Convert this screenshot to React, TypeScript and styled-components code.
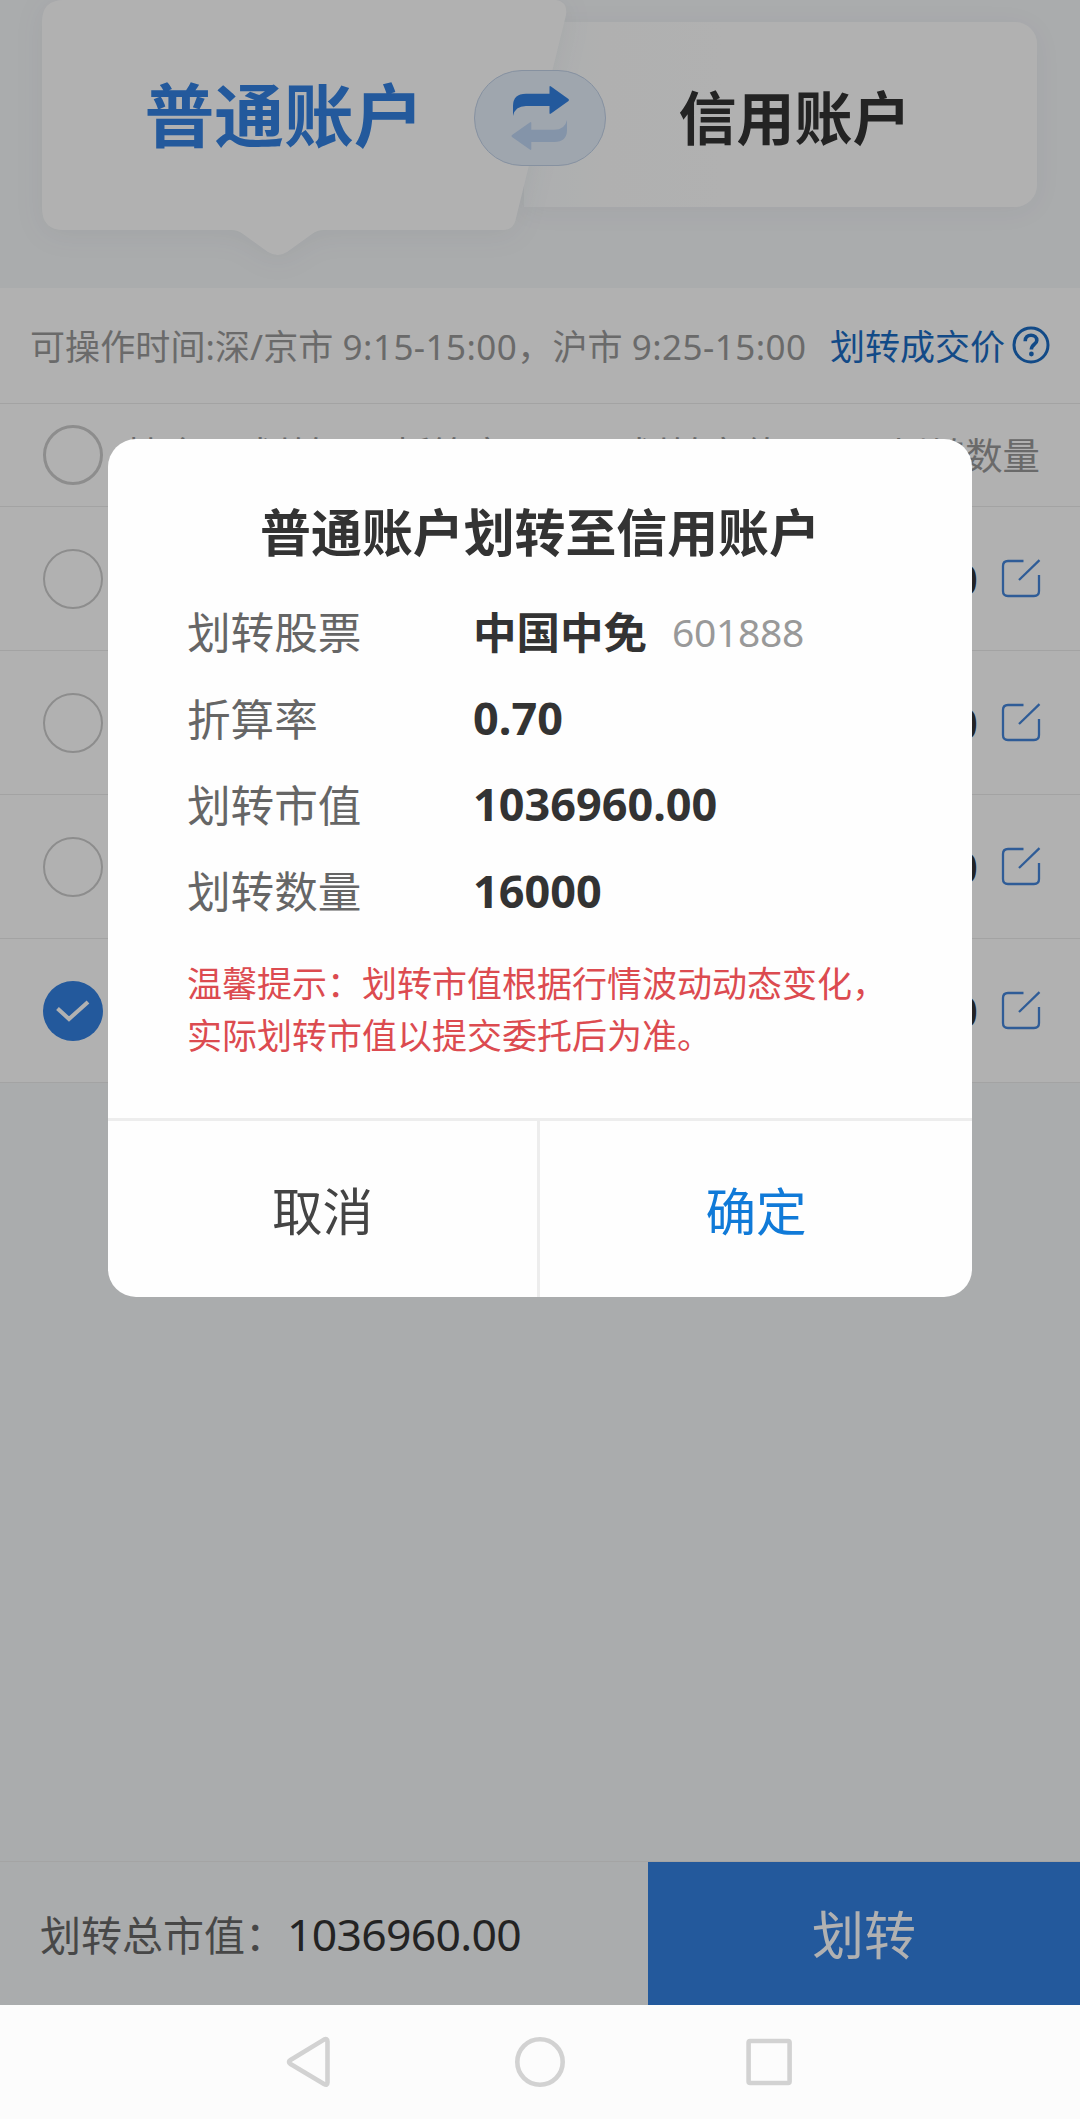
import React from "react";
import styled, { createGlobalStyle } from "styled-components";

const GlobalStyle = createGlobalStyle`
  *, *::before, *::after { box-sizing: border-box; }
  body {
    margin: 0;
    background: #f4f6f8;
    font-family: "Noto Sans", "Noto Sans CJK SC", sans-serif;
    color: #333;
  }
  button { border: 0; padding: 0; background: none; font: inherit; color: inherit; }
`;

const Screen = styled.div`
  position: relative;
  display: flex;
  flex-direction: column;
  width: 1080px;
  height: 2119px;
  overflow: hidden;
  white-space: nowrap;
`;

const Page = styled.main`
  position: relative;
  display: flex;
  flex-direction: column;
  height: 2005px;
  background: #f4f6f8;
`;

/* ---------- account switch ---------- */

const AccountSwitch = styled.section`
  position: relative;
  display: flex;
  flex: none;
  height: 288px;
  padding-left: 42px;
`;

const AccountTab = styled.button<{ $active?: boolean }>`
  position: relative;
  display: flex;
  align-items: center;
  justify-content: center;
  width: ${(p) => (p.$active ? 482 : 513)}px;
  height: ${(p) => (p.$active ? 226 : 185)}px;
  margin-top: ${(p) => (p.$active ? 0 : 22)}px;
  padding-top: ${(p) => (p.$active ? 3 : 6)}px;
  padding-left: ${(p) => (p.$active ? 2 : 28)}px;
  border-radius: 0 22px 22px 0;
  background: ${(p) => (p.$active ? "transparent" : "linear-gradient(90deg, #f8fafc 0, #fcfdfd 80px, #fefefe 200px)")};
  box-shadow: ${(p) => (p.$active ? "none" : "0 4px 28px rgba(40, 60, 90, 0.05)")};
  z-index: ${(p) => (p.$active ? 1 : 0)};
  color: ${(p) => (p.$active ? "#3380e0" : "#333")};
  font-size: ${(p) => (p.$active ? 69.8 : 58)}px;
  font-weight: 700;
  line-height: 1;
`;

const TabLabel = styled.span`
  position: relative;
`;

const ActiveShape = styled.svg`
  position: absolute;
  left: -42px;
  top: 0;
  overflow: visible;
  filter: drop-shadow(0 4px 14px rgba(40, 60, 90, 0.06));
`;

const SwapButton = styled.button`
  position: absolute;
  z-index: 2;
  left: 474px;
  top: 70px;
  width: 132px;
  height: 96px;
  border: 1px solid #c0d0e6;
  border-radius: 48px;
  background: #e4eefa;
`;

/* ---------- notice and table ---------- */

const Notice = styled.div`
  display: flex;
  align-items: center;
  justify-content: space-between;
  flex: none;
  height: 116px;
  padding: 0 30px 2px 30px;
  border-bottom: 1px solid #eaeaea;
  background: #fefefe;
  color: #999;
  font-size: 35px;
`;

const NoticeText = styled.span`
  letter-spacing: 0.1px;
`;

const Hours = styled.span`
  letter-spacing: 0.45px;
`;

const PriceLink = styled.a`
  display: flex;
  align-items: center;
  gap: 7px;
  color: #1a6bc2;
`;

const TableHead = styled.div`
  display: flex;
  align-items: center;
  flex: none;
  height: 103px;
  padding: 0 40px 0 43px;
  border-bottom: 1px solid #eaeaea;
  background: #fefefe;
  color: #999;
  font-size: 37.4px;
`;

const Column = styled.span<{ $width: number }>`
  width: ${(p) => p.$width}px;
  padding-bottom: 4px;
`;

const LastColumn = styled.span`
  margin-left: auto;
  padding-bottom: 2px;
`;

const Row = styled.div`
  display: flex;
  align-items: center;
  flex: none;
  height: 144px;
  padding: 0 39px 0 43px;
  border-bottom: 1px solid #eaeaea;
  background: #fefefe;
`;

const Quantity = styled.span`
  margin-left: auto;
  margin-right: 23px;
  font-size: 41px;
  font-weight: 500;
`;

const Radio = styled.span<{ $heavy?: boolean }>`
  flex: none;
  width: 60px;
  height: 60px;
  margin-right: 23px;
  border: ${(p) => (p.$heavy ? 3 : 2.5)}px solid #cacaca;
  border-radius: 50%;
`;

const RadioChecked = styled.span`
  display: flex;
  flex: none;
  align-items: center;
  justify-content: center;
  width: 60px;
  height: 60px;
  border-radius: 50%;
  background: #3380e0;
`;

/* ---------- footer ---------- */

const Footer = styled.footer`
  display: flex;
  align-items: stretch;
  height: 144px;
  margin-top: auto;
  border-top: 1px solid #ebebeb;
`;

const Total = styled.div`
  display: flex;
  align-items: center;
  width: 648px;
  padding-left: 40px;
`;

const TotalLabel = styled.span`
  width: 247px;
  padding-bottom: 2px;
  color: #666;
  font-size: 41px;
`;

const TotalValue = styled.span`
  font-size: 44.5px;
  letter-spacing: -0.7px;
`;

const TransferButton = styled.button`
  flex: 1;
  padding-bottom: 3px;
  background: #3380e0;
  color: #fefefe;
  font-size: 52px;
`;

const Mask = styled.div`
  position: absolute;
  z-index: 5;
  inset: 0;
  background: rgba(0, 0, 0, 0.3);
`;

/* ---------- dialog ---------- */

const Dialog = styled.section`
  position: absolute;
  z-index: 6;
  left: 108px;
  top: 439px;
  display: flex;
  flex-direction: column;
  width: 864px;
  height: 858px;
  border-radius: 28px;
  overflow: hidden;
  background: #fefefe;
`;

const DialogTitle = styled.h2`
  margin: 62px 0 23px;
  font-size: 50.9px;
  font-weight: 700;
  line-height: 64px;
  text-align: center;
`;

const Detail = styled.div`
  display: flex;
  align-items: center;
  height: 86.4px;
  padding-left: 79px;
  font-size: 43.6px;
`;

const DetailLabel = styled.span`
  width: 286px;
  padding-bottom: 2px;
  color: #666;
`;

const DetailValue = styled.strong<{ $numeric?: boolean }>`
  padding-bottom: ${(p) => (p.$numeric ? 0 : 2)}px;
  font-weight: 700;
  font-size: ${(p) => (p.$numeric ? 45 : 43.5)}px;
`;

const StockCode = styled.span`
  margin-left: 25px;
  color: #999;
  font-size: 39px;
  letter-spacing: -0.3px;
`;

const Tip = styled.p`
  margin: 24px 0 0 79px;
  color: #dc4b50;
  font-size: 35px;
  line-height: 52px;
`;

const DialogActions = styled.div`
  display: flex;
  height: 179px;
  margin-top: auto;
  border-top: 3px solid #ededed;
`;

const ActionButton = styled.button<{ $primary?: boolean }>`
  width: 432px;
  border-right: ${(p) => (p.$primary ? "0" : "3px solid #ededed")};
  color: ${(p) => (p.$primary ? "#107ad8" : "#444")};
  font-size: 50.6px;
`;

/* ---------- system navigation ---------- */

const SystemNav = styled.nav`
  height: 114px;
  background: #fcfcfc;
`;

function EditIcon() {
  return (
    <svg width="40" height="40" viewBox="0 0 40 40" fill="none" stroke="#4485d8" strokeWidth="2.3">
      <path d="M22.5 2H7Q2 2 2 7V32Q2 37 7 37H33Q38 37 38 32V16" />
      <path d="M38.5 1.2L18 21" />
    </svg>
  );
}

function HelpIcon() {
  return (
    <svg width="38" height="38" viewBox="0 0 38 38" fill="none" stroke="#1a6bc2" strokeWidth="3">
      <circle cx="19" cy="19" r="17" />
      <path d="M13.2 15.2C13.2 11 15.8 9.3 19 9.3S24.8 11.3 24.8 14.4C24.8 18 19.4 18.5 19.4 23.5" strokeWidth="3.6" />
      <circle cx="19.4" cy="28" r="2.4" fill="#1a6bc2" stroke="none" />
    </svg>
  );
}

function SwapIcon() {
  return (
    <svg width="130" height="94" viewBox="475 71 130 94">
      <path
        d="M513 116V106Q513 93.7 526 93.7H549.5V87Q549.5 85.5 551 86.5L568.5 99Q569.5 100 568.5 101L551 113.6Q549.5 114.6 549.5 113V106H526Q515 106 513 116Z"
        fill="#3380e0"
      />
      <path
        d="M567 120V130Q567 142 554 142H531.3V149Q531.3 150.5 529.8 149.5L512 137Q510.8 136 512 135L529.8 122.5Q531.3 121.5 531.3 123V129.8H554Q565 129.8 567 120Z"
        fill="#bdd4f2"
      />
    </svg>
  );
}

const rows = [
  { quantity: "0", checked: false },
  { quantity: "0", checked: false },
  { quantity: "0", checked: false },
  { quantity: "16000", checked: true },
];

export default function App() {
  return (
    <>
      <GlobalStyle />
      <Screen>
        <Page>
          <AccountSwitch>
            <AccountTab $active>
              <ActiveShape width="600" height="260" viewBox="0 0 600 260" fill="#fefefe">
                <path d="M64 0H556Q568 2 566 15L516 218Q514 230 503 230H324Q317 230 312 234L287 252Q278 258 268 252L243 234Q238 230 231 230H64Q42 230 42 208V22Q42 0 64 0Z" />
              </ActiveShape>
              <TabLabel>普通账户</TabLabel>
            </AccountTab>
            <AccountTab>
              <TabLabel>信用账户</TabLabel>
            </AccountTab>
            <SwapButton>
              <SwapIcon />
            </SwapButton>
          </AccountSwitch>
          <Notice>
            <NoticeText>
              可操作时间:深/京市 <Hours>9:15-15:00</Hours>，沪市 <Hours>9:25-15:00</Hours>
            </NoticeText>
            <PriceLink>
              划转成交价
              <HelpIcon />
            </PriceLink>
          </Notice>
          <TableHead>
            <Radio $heavy />
            <Column $width={268}>持仓/可划转</Column>
            <Column $width={237}>折算率</Column>
            <Column $width={200}>划转市值</Column>
            <LastColumn>划转数量</LastColumn>
          </TableHead>
          {rows.map((row, i) => (
            <Row key={i}>
              {row.checked ? (
                <RadioChecked>
                  <svg width="34" height="24" viewBox="0 0 34 24" fill="none" stroke="#fefefe" strokeWidth="4">
                    <path d="M1.5 9.5L13 20L32 3" />
                  </svg>
                </RadioChecked>
              ) : (
                <Radio />
              )}
              <Quantity>{row.quantity}</Quantity>
              <EditIcon />
            </Row>
          ))}
          <Footer>
            <Total>
              <TotalLabel>划转总市值：</TotalLabel>
              <TotalValue>1036960.00</TotalValue>
            </Total>
            <TransferButton>划转</TransferButton>
          </Footer>
          <Mask />
        </Page>
        <Dialog>
          <DialogTitle>普通账户划转至信用账户</DialogTitle>
          <Detail>
            <DetailLabel>划转股票</DetailLabel>
            <DetailValue>中国中免</DetailValue>
            <StockCode>601888</StockCode>
          </Detail>
          <Detail>
            <DetailLabel>折算率</DetailLabel>
            <DetailValue $numeric>0.70</DetailValue>
          </Detail>
          <Detail>
            <DetailLabel>划转市值</DetailLabel>
            <DetailValue $numeric>1036960.00</DetailValue>
          </Detail>
          <Detail>
            <DetailLabel>划转数量</DetailLabel>
            <DetailValue $numeric>16000</DetailValue>
          </Detail>
          <Tip>
            温馨提示：划转市值根据行情波动动态变化，
            <br />
            实际划转市值以提交委托后为准。
          </Tip>
          <DialogActions>
            <ActionButton>取消</ActionButton>
            <ActionButton $primary>确定</ActionButton>
          </DialogActions>
        </Dialog>
        <SystemNav>
          <svg width="1080" height="114" viewBox="0 2005 1080 114" fill="none" stroke="#d2d2d2" strokeWidth="4.6" strokeLinejoin="round">
            <path d="M290.5 2060L324 2039.6Q327.5 2038 327.5 2041.5V2082.5Q327.5 2086 324 2084L290.5 2064Q287.5 2062 290.5 2060Z" />
            <circle cx="540" cy="2062" r="22.7" />
            <rect x="748.6" y="2041" width="41" height="42" rx="1.5" />
          </svg>
        </SystemNav>
      </Screen>
    </>
  );
}
